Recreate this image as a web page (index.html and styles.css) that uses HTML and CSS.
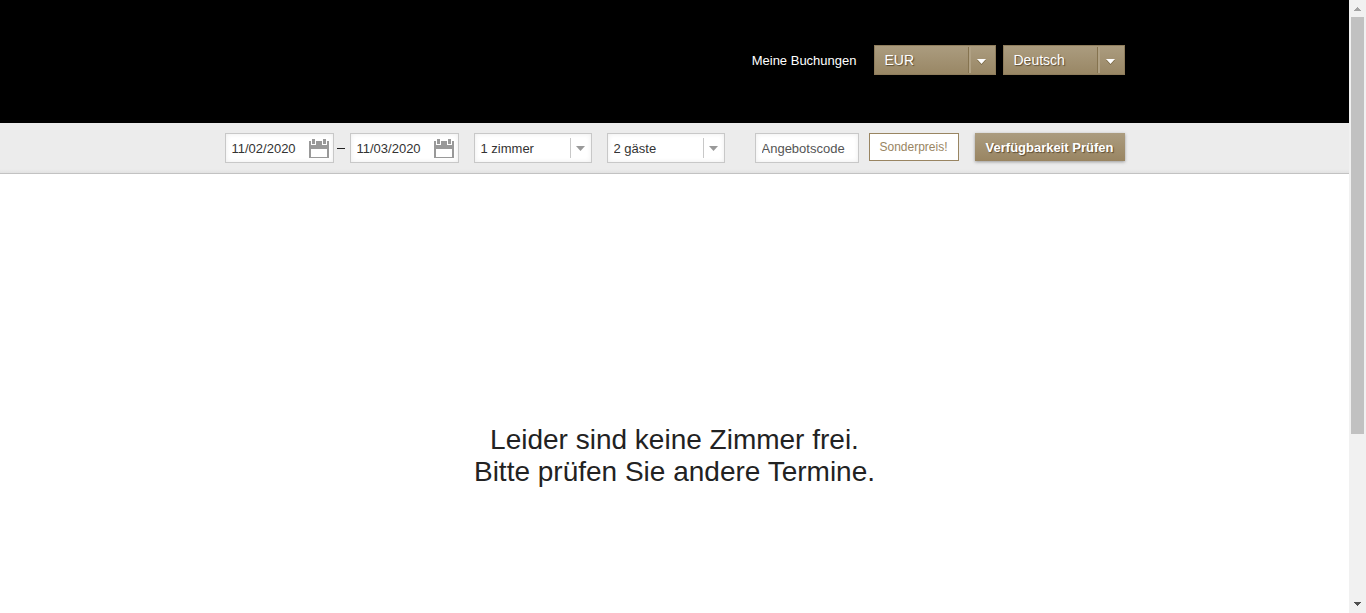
FILE: index.html
```
<!DOCTYPE html>
<html lang="de">
<head>
<meta charset="utf-8">
<meta name="viewport" content="width=device-width, initial-scale=1">
<title>Verfügbarkeit</title>
<link rel="stylesheet" href="styles.css">
</head>
<body>
<div class="page">
  <header class="header">
    <div class="container header-row">
      <a class="bookings" href="#">Meine Buchungen</a>
      <div class="picker picker-gold">
        <select aria-label="Währung"><option>EUR</option></select>
        <svg class="arrow" width="9" height="5" viewBox="0 0 9 5" aria-hidden="true"><path d="M0 0h9L4.500 5z"/></svg>
      </div>
      <div class="picker picker-gold">
        <select aria-label="Sprache"><option>Deutsch</option></select>
        <svg class="arrow" width="9" height="5" viewBox="0 0 9 5" aria-hidden="true"><path d="M0 0h9L4.500 5z"/></svg>
      </div>
    </div>
  </header>
  <form class="search">
    <div class="container search-row">
      <div class="dates">
        <div class="date">
          <input class="field" type="text" value="11/02/2020" aria-label="Anreise">
          <svg class="calendar" width="20" height="20" viewBox="0 0 20 20" aria-hidden="true"><path fill-rule="evenodd" d="M0 3h2v4h5V3h6v4h5V3h2v17H0zM2 11v8h16v-8z"/><path d="M3 1h3v5H3zM14 1h3v5h-3z"/></svg>
        </div>
        <span class="dash"></span>
        <div class="date">
          <input class="field" type="text" value="11/03/2020" aria-label="Abreise">
          <svg class="calendar" width="20" height="20" viewBox="0 0 20 20" aria-hidden="true"><path fill-rule="evenodd" d="M0 3h2v4h5V3h6v4h5V3h2v17H0zM2 11v8h16v-8z"/><path d="M3 1h3v5H3zM14 1h3v5h-3z"/></svg>
        </div>
      </div>
      <div class="picker picker-light">
        <select class="field" aria-label="Zimmer"><option>1 zimmer</option></select>
        <svg class="arrow" width="9" height="5" viewBox="0 0 9 5" aria-hidden="true"><path d="M0 0h9L4.500 5z"/></svg>
      </div>
      <div class="picker picker-light">
        <select class="field" aria-label="Gäste"><option>2 gäste</option></select>
        <svg class="arrow" width="9" height="5" viewBox="0 0 9 5" aria-hidden="true"><path d="M0 0h9L4.500 5z"/></svg>
      </div>
      <input class="field code" type="text" placeholder="Angebotscode" aria-label="Angebotscode">
      <button class="special" type="button">Sonderpreis!</button>
      <button class="submit" type="button">Verfügbarkeit Prüfen</button>
    </div>
  </form>
  <main class="message">
    <p>Leider sind keine Zimmer frei.<br>Bitte prüfen Sie andere Termine.</p>
  </main>
</div>
<div class="scrollbar" aria-hidden="true">
  <svg class="scroll-up" width="7" height="4" viewBox="0 0 7 4" shape-rendering="crispEdges"><path d="M3 0h1v1h1v1h1v1h1v1H0V3h1V2h1V1h1z"/></svg>
  <div class="track"><div class="thumb"></div></div>
  <svg class="scroll-down" width="7" height="4" viewBox="0 0 7 4" shape-rendering="crispEdges"><path d="M0 0h7v1H6v1H5v1H4v1H3V3H2V2H1V1H0z"/></svg>
</div>
</body>
</html>
```
FILE: styles.css
```
* { box-sizing: border-box; }

body {
  display: grid;
  grid-template-columns: 1fr 17px;
  height: 100vh;
  margin: 0;
  background: #fff;
  color: #222;
  font: 13px "Liberation Sans", Arial, sans-serif;
}

input, select, button { font: inherit; margin: 0; border-radius: 0; }

.page { display: flex; flex-direction: column; min-width: 0; }

.container { width: 100%; max-width: 900px; margin: 0 auto; }

.header { padding: 45px 0 48px; background: #000; }
.header-row { display: flex; justify-content: flex-end; align-items: center; gap: 7px; }
.bookings { margin-right: 10px; color: #fff; text-decoration: none; }

.picker { position: relative; }
.picker select {
  display: block;
  width: 100%;
  height: 30px;
  appearance: none;
}
.picker::after {
  content: "";
  position: absolute;
  pointer-events: none;
}
.arrow { position: absolute; pointer-events: none; }

.picker-gold { width: 122px; }
.picker-gold select {
  padding: 0 30px 0 10px;
  border: 1px solid #8f7d5c;
  background: linear-gradient(#ab9c7f, #998765);
  color: #fff;
  font-size: 14px;
  text-shadow: 1px 1px 1px #5c4d33;
}
.picker-gold::after {
  top: 2px;
  right: 25px;
  bottom: 2px;
  width: 2px;
  border-left: 1px solid #85734f;
  background: #b0a184;
}
.picker-gold .arrow { top: 14px; right: 10px; fill: #fff; filter: drop-shadow(0 1px 0 #75643f); }

.search {
  padding: 10px 0;
  border-bottom: 1px solid #c2c2c2;
  background: linear-gradient(to top, #e2e2e2, #ececec 4px);
}
.search-row { display: flex; align-items: flex-start; gap: 15px; }

.field {
  height: 30px;
  padding: 0 6px;
  border: 1px solid #c8c8c8;
  background: #fff;
  box-shadow: inset 0 0 5px #ececec;
  color: #333;
}

.dates { display: flex; }
.date { position: relative; width: 109px; }
.date .field { display: block; width: 100%; padding-right: 28px; }
.calendar { position: absolute; top: 5px; right: 5px; fill: #999; }
.dash { width: 8px; height: 1px; margin: 15px 5px 0 3px; background: #222; }

.picker-light { width: 118px; }
.picker-light .field { padding-right: 24px; }
.picker-light::after { top: 5px; right: 21px; bottom: 5px; width: 1px; background: #c8c8c8; }
.picker-light .arrow { top: 13px; right: 7px; fill: #999; }

.code { width: 104px; margin-left: 15px; }
.code::placeholder { color: #555; opacity: 1; }

.special {
  width: 90px;
  height: 28px;
  margin-left: -5px;
  padding: 0;
  border: 1px solid #998562;
  background: #fff;
  color: #998562;
  font-size: 12px;
}
.submit {
  flex: 1;
  height: 28px;
  margin-left: 1px;
  padding: 0;
  border: 0;
  background: linear-gradient(#ab9c7f, #998562);
  box-shadow: 0 1px 3px #999;
  color: #fff;
  font-weight: bold;
  text-shadow: 1px 1px 1px #5c4d33;
  white-space: nowrap;
}

.message {
  flex: 1;
  padding: 250px 16px 0;
  text-align: center;
  font-size: 28px;
  line-height: 32px;
}
.message p { margin: 0; }

.scrollbar {
  display: flex;
  flex-direction: column;
  align-items: center;
  gap: 6px;
  padding: 7px 0;
  background: #f1f1f1;
}
.scroll-up { fill: #a3a3a3; }
.scroll-down { fill: #505050; }
.track { flex: 1; width: 13px; }
.thumb { height: 72%; background: #c1c1c1; }
```
